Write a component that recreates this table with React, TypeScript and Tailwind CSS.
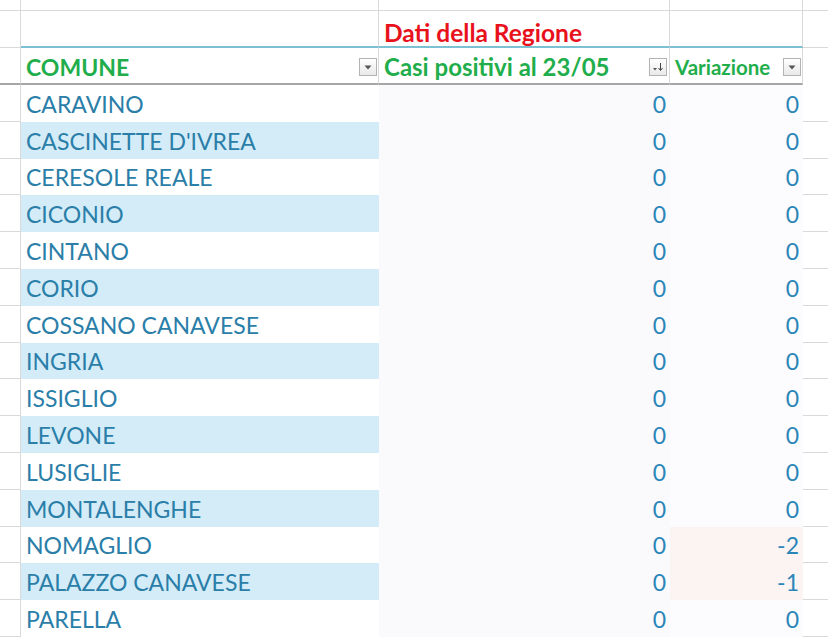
import type { ReactNode } from "react";

type Row = { name: string; casi: number | null; variazione: number | null; alert?: boolean };

const rows: Row[] = [
  { name: "CARAVINO", casi: 0, variazione: 0 },
  { name: "CASCINETTE D'IVREA", casi: 0, variazione: 0 },
  { name: "CERESOLE REALE", casi: 0, variazione: 0 },
  { name: "CICONIO", casi: 0, variazione: 0 },
  { name: "CINTANO", casi: 0, variazione: 0 },
  { name: "CORIO", casi: 0, variazione: 0 },
  { name: "COSSANO CANAVESE", casi: 0, variazione: 0 },
  { name: "INGRIA", casi: 0, variazione: 0 },
  { name: "ISSIGLIO", casi: 0, variazione: 0 },
  { name: "LEVONE", casi: 0, variazione: 0 },
  { name: "LUSIGLIE", casi: 0, variazione: 0 },
  { name: "MONTALENGHE", casi: 0, variazione: 0 },
  { name: "NOMAGLIO", casi: 0, variazione: -2, alert: true },
  { name: "PALAZZO CANAVESE", casi: 0, variazione: -1, alert: true },
  { name: "PARELLA", casi: 0, variazione: 0 },
  // next row only peeks in at the bottom edge
  { name: "", casi: null, variazione: null },
];

const grid = "grid grid-cols-[21px_358px_291px_133px_25px] grid-rows-[100%] overflow-hidden";
const font = { fontFamily: "Lato, 'Open Sans', sans-serif" };

/** Excel autofilter dropdown; `sorted` adds the little down arrow. */
function FilterButton({ sorted = false }: { sorted?: boolean }) {
  return (
    <span className="flex h-[18px] w-[18px] items-center justify-center border border-[#b3b3b3] bg-gradient-to-b from-white to-[#e9e9e9]">
      {sorted ? (
        <svg width="12" height="10" viewBox="0 0 12 10">
          <path d="M1 6 L5 6 L3 8.5 Z" fill="#555" />
          <path d="M8.5 1 V8" stroke="#444" strokeWidth="1" />
          <path d="M6.5 6 L8.5 8.5 L10.5 6" stroke="#444" strokeWidth="1" fill="none" />
        </svg>
      ) : (
        <svg width="8" height="5" viewBox="0 0 8 5">
          <path d="M0.5 0.5 L7.5 0.5 L4 4.5 Z" fill="#555" />
        </svg>
      )}
    </span>
  );
}

function Cell({ className = "", children }: { className?: string; children?: ReactNode }) {
  return <div className={`flex min-h-0 items-center ${className}`}>{children}</div>;
}

export default function App() {
  return (
    <div className="h-[637px] w-[828px] overflow-hidden bg-white" style={font}>
      {/* blank top row */}
      <div className={`${grid} h-[11px]`}>
        <Cell className="border-b border-r border-[#d9d9d9]" />
        <Cell className="border-b border-r border-[#d9d9d9]" />
        <Cell className="border-b border-r border-[#d9d9d9]" />
        <Cell className="border-b border-r border-[#d9d9d9]" />
        <Cell className="border-b border-[#d9d9d9]" />
      </div>

      {/* group title row */}
      <div className={`${grid} h-[37px]`}>
        <Cell className="border-b border-r border-[#d9d9d9]" />
        <Cell className="border-b-2 border-r border-b-[#7cc0d3] border-r-[#d9d9d9]" />
        <Cell className="border-b-2 border-r border-b-[#7cc0d3] border-r-[#d9d9d9] pl-[5px] pt-[9px]">
          <span className="text-[24.5px] leading-none font-bold text-[#e8121c]">Dati della Regione</span>
        </Cell>
        <Cell className="border-b-2 border-r border-b-[#7cc0d3] border-r-[#d9d9d9]" />
        <Cell className="border-b border-[#d9d9d9]" />
      </div>

      {/* table header */}
      <div className={`${grid} h-[37px]`}>
        <Cell className="border-b-2 border-r border-b-[#a6a6a6] border-r-[#d9d9d9]" />
        <Cell className="justify-between border-b-2 border-r border-b-[#a6a6a6] border-r-[#d9d9d9] pl-[5px] pr-[1px] pt-[3px]">
          <span className="text-[23px] leading-none font-bold text-[#1fae4b]">COMUNE</span>
          <FilterButton />
        </Cell>
        <Cell className="justify-between border-b-2 border-r border-b-[#a6a6a6] border-r-[#d9d9d9] pl-[5px] pr-[2px] pt-[3px]">
          <span className="text-[24px] leading-none font-bold text-[#1fae4b]">Casi positivi al 23/05</span>
          <FilterButton sorted />
        </Cell>
        <Cell className="justify-between border-b-2 border-r border-b-[#a6a6a6] border-r-[#d9d9d9] pl-[5px] pr-[1px] pt-[3px]">
          <span className="text-[20.5px] leading-none font-bold text-[#1fae4b]">Variazione</span>
          <FilterButton />
        </Cell>
        <Cell />
      </div>

      {/* data rows */}
      {rows.map((r, i) => (
        <div key={i} className={`${grid} h-[36.8px]`}>
          <Cell className="border-b border-r border-[#d9d9d9]" />
          <Cell className={`pl-[5px] pt-[2px] ${i % 2 ? "bg-[#d3ecf8]" : "bg-white"}`}>
            <span className="text-[23px] leading-none text-[#2a7ea8]">{r.name}</span>
          </Cell>
          <Cell className="justify-end bg-[#fafafd] pr-[4px] pt-[2px]">
            <span className="text-[23px] leading-none text-[#2a86b8]">{r.casi}</span>
          </Cell>
          <Cell className={`justify-end pr-[4px] pt-[2px] ${r.alert ? "bg-[#fcf3f3]" : "bg-[#fcfcfe]"}`}>
            <span className="text-[23px] leading-none text-[#2a86b8]">{r.variazione}</span>
          </Cell>
          <Cell className="border-b border-[#d9d9d9]" />
        </div>
      ))}
    </div>
  );
}
